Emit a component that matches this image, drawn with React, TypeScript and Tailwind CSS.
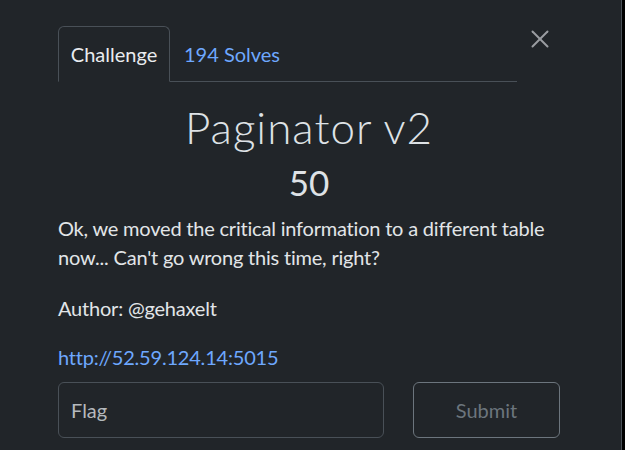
import { X } from 'lucide-react';

export default function App() {
  return (
    <div className="flex h-[450px] w-[625px] overflow-hidden bg-black font-['Lato','Noto_Sans',sans-serif]">
      <div className="flex h-full w-[622px] flex-col border-r border-[#495057] bg-[#212529] text-[#dee2e6]">
        <div className="flex items-start pl-[58px] pt-[26px]">
          <div className="flex w-[459px] border-b border-[#495057]">
            <div className="-mb-px flex h-[56px] w-[112px] items-center justify-center rounded-t-md border border-b-[#212529] border-[#495057] text-[20px] text-[#e9ecef]">
              Challenge
            </div>
            <div className="flex h-[55px] items-center px-[14px] text-[20px] text-[#6ea8fe]">194 Solves</div>
          </div>
          <button className="ml-[8px] mt-[-2px] text-[#9a9da1]">
            <X className="h-[30px] w-[30px]" strokeWidth={1.6} />
          </button>
        </div>

        <div className="flex w-[618px] flex-col items-center">
          <h2 className="mt-[21px] text-[44px] font-light leading-[48px] tracking-[1px] text-[#dee2e6]">Paginator v2</h2>
          <h3 className="mt-[11px] text-[35px] leading-[40px] text-[#dee2e6]">50</h3>
        </div>

        <div className="w-[562px] pl-[58px] pt-[12px] text-[20px] leading-[29px] tracking-[-0.2px] text-[#e2e5e8]">
          <p>Ok, we moved the critical information to a different table now... Can't go wrong this time, right?</p>
          <p className="mt-[22px]">Author: @gehaxelt</p>
          <p className="mt-[20px]">
            <a className="text-[#6ea8fe]">http://52.59.124.14:5015</a>
          </p>
        </div>

        <div className="mt-[10px] flex pl-[58px]">
          <input
            placeholder="Flag"
            className="h-[56px] w-[326px] rounded-md border border-[#495057] bg-[#212529] px-[12px] text-[20px] text-[#dee2e6] placeholder:text-[#b5b9bd] outline-none"
          />
          <button className="ml-[29px] h-[56px] w-[147px] rounded-md border border-[#6c757d] text-[20px] text-[#6c757d]">
            Submit
          </button>
        </div>
      </div>
    </div>
  );
}
